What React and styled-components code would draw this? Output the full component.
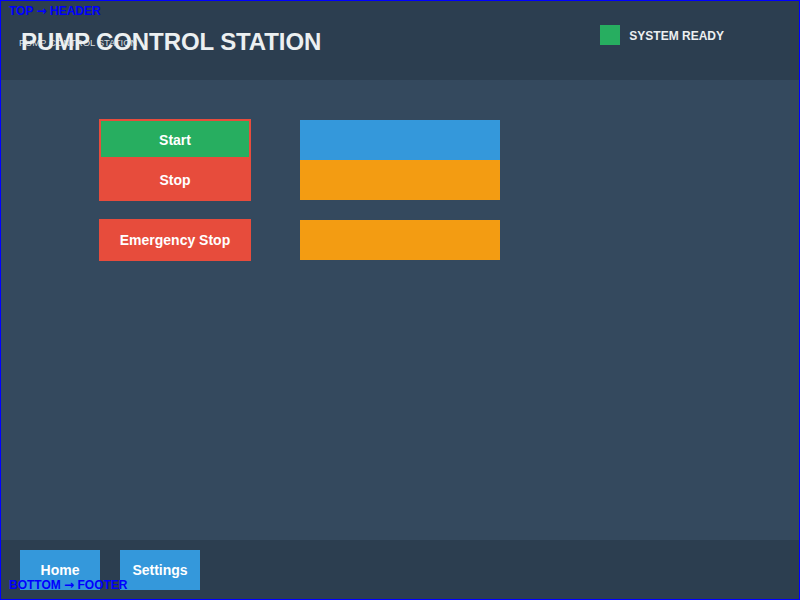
import React from 'react';
import styled, { createGlobalStyle } from 'styled-components';

const GlobalStyle = createGlobalStyle`
  html, body {
    margin: 0;
    padding: 0;
    background: #34495e;
  }
  * {
    box-sizing: border-box;
  }
`;

const Frame = styled.div`
  position: relative;
  width: 800px;
  height: 600px;
  border: 1px solid #0000ff;
  display: flex;
  flex-direction: column;
  font-family: 'Liberation Sans', Arial, sans-serif;
  background: #34495e;
  overflow: hidden;
`;

const Header = styled.header`
  height: 79px;
  flex-shrink: 0;
  background: #2c3e50;
  display: flex;
  align-items: center;
  justify-content: space-between;
  padding: 0 75px 0 20px;
`;

const Title = styled.h1`
  margin: 2px 0 0;
  font-size: 24px;
  font-weight: bold;
  color: #ecf0f1;
  letter-spacing: -0.1px;
`;

const Status = styled.div`
  display: flex;
  align-items: center;
  gap: 9px;
  margin-top: -11px;
  font-size: 12px;
  font-weight: bold;
  color: #ecf0f1;
`;

const StatusText = styled.span`
  padding-top: 2px;
`;

const Lamp = styled.span`
  width: 20px;
  height: 20px;
  background: ${p => p.$color};
`;

const Main = styled.main`
  flex: 1;
  background: #34495e;
  display: flex;
  align-items: flex-start;
  gap: 48px;
  padding: 39px 0 0 98px;
`;

const Column = styled.div`
  display: flex;
  flex-direction: column;
  gap: ${p => p.$gap}px;
`;

const Stack = styled.div`
  display: flex;
  flex-direction: column;
`;

const ControlButton = styled.button`
  width: 152px;
  height: ${p => p.$h || 42}px;
  border: 0;
  padding: ${p => (p.$ring ? '2px 0 0' : '0')};
  background: ${p => p.$bg};
  box-shadow: ${p => (p.$ring ? `inset 0 0 0 2px ${p.$ring}` : 'none')};
  color: #ffffff;
  font-family: 'Liberation Sans', Arial, sans-serif;
  font-size: 14px;
  font-weight: bold;
  cursor: pointer;
`;

const Gauge = styled.div`
  width: 200px;
  height: 40px;
  margin-left: 1px;
  background: ${p => p.$bg};
`;

const GaugeStack = styled.div`
  display: flex;
  flex-direction: column;
  margin-top: 1px;
`;

const Footer = styled.footer`
  height: 59px;
  flex-shrink: 0;
  background: #2c3e50;
  display: flex;
  align-items: flex-start;
  gap: 20px;
  padding: 10px 19px;
`;

const NavButton = styled.button`
  width: 80px;
  height: 40px;
  border: 0;
  padding: 0;
  background: #3498db;
  color: #ffffff;
  font-family: 'Liberation Sans', Arial, sans-serif;
  font-size: 14px;
  font-weight: bold;
  cursor: pointer;
`;

const Marker = styled.div`
  position: absolute;
  left: 8px;
  top: ${p => p.$top}px;
  font-size: 12px;
  font-weight: bold;
  color: #0000ff;
  line-height: 14px;
  pointer-events: none;
`;

const Arrow = styled.span`
  font-family: 'DejaVu Sans', sans-serif;
  font-weight: bold;
  font-size: 12px;
`;

const Ghost = styled.div`
  position: absolute;
  left: 18px;
  top: 36px;
  font-size: 9.5px;
  color: rgba(236, 240, 241, 0.9);
  line-height: 11px;
  pointer-events: none;
`;

export default function App() {
  return (
    <>
      <GlobalStyle />
      <Frame>
        <Header>
          <Title>PUMP CONTROL STATION</Title>
          <Status>
            <Lamp $color="#27ae60" />
            <StatusText>SYSTEM READY</StatusText>
          </Status>
        </Header>
        <Main>
          <Column $gap={18}>
            <Stack>
              <ControlButton $bg="#27ae60" $ring="#e74c3c" $h={40}>Start</ControlButton>
              <ControlButton $bg="#e74c3c">Stop</ControlButton>
            </Stack>
            <ControlButton $bg="#e74c3c">Emergency Stop</ControlButton>
          </Column>
          <Column $gap={20}>
            <GaugeStack>
              <Gauge $bg="#3498db" />
              <Gauge $bg="#f39c12" />
            </GaugeStack>
            <Gauge $bg="#f39c12" />
          </Column>
        </Main>
        <Footer>
          <NavButton>Home</NavButton>
          <NavButton>Settings</NavButton>
        </Footer>
        <Marker $top={3}>TOP <Arrow>→</Arrow> HEADER</Marker>
        <Ghost>PUMP CONTROL STATION</Ghost>
        <Marker $top={577}>BOTTOM <Arrow>→</Arrow> FOOTER</Marker>
      </Frame>
    </>
  );
}
